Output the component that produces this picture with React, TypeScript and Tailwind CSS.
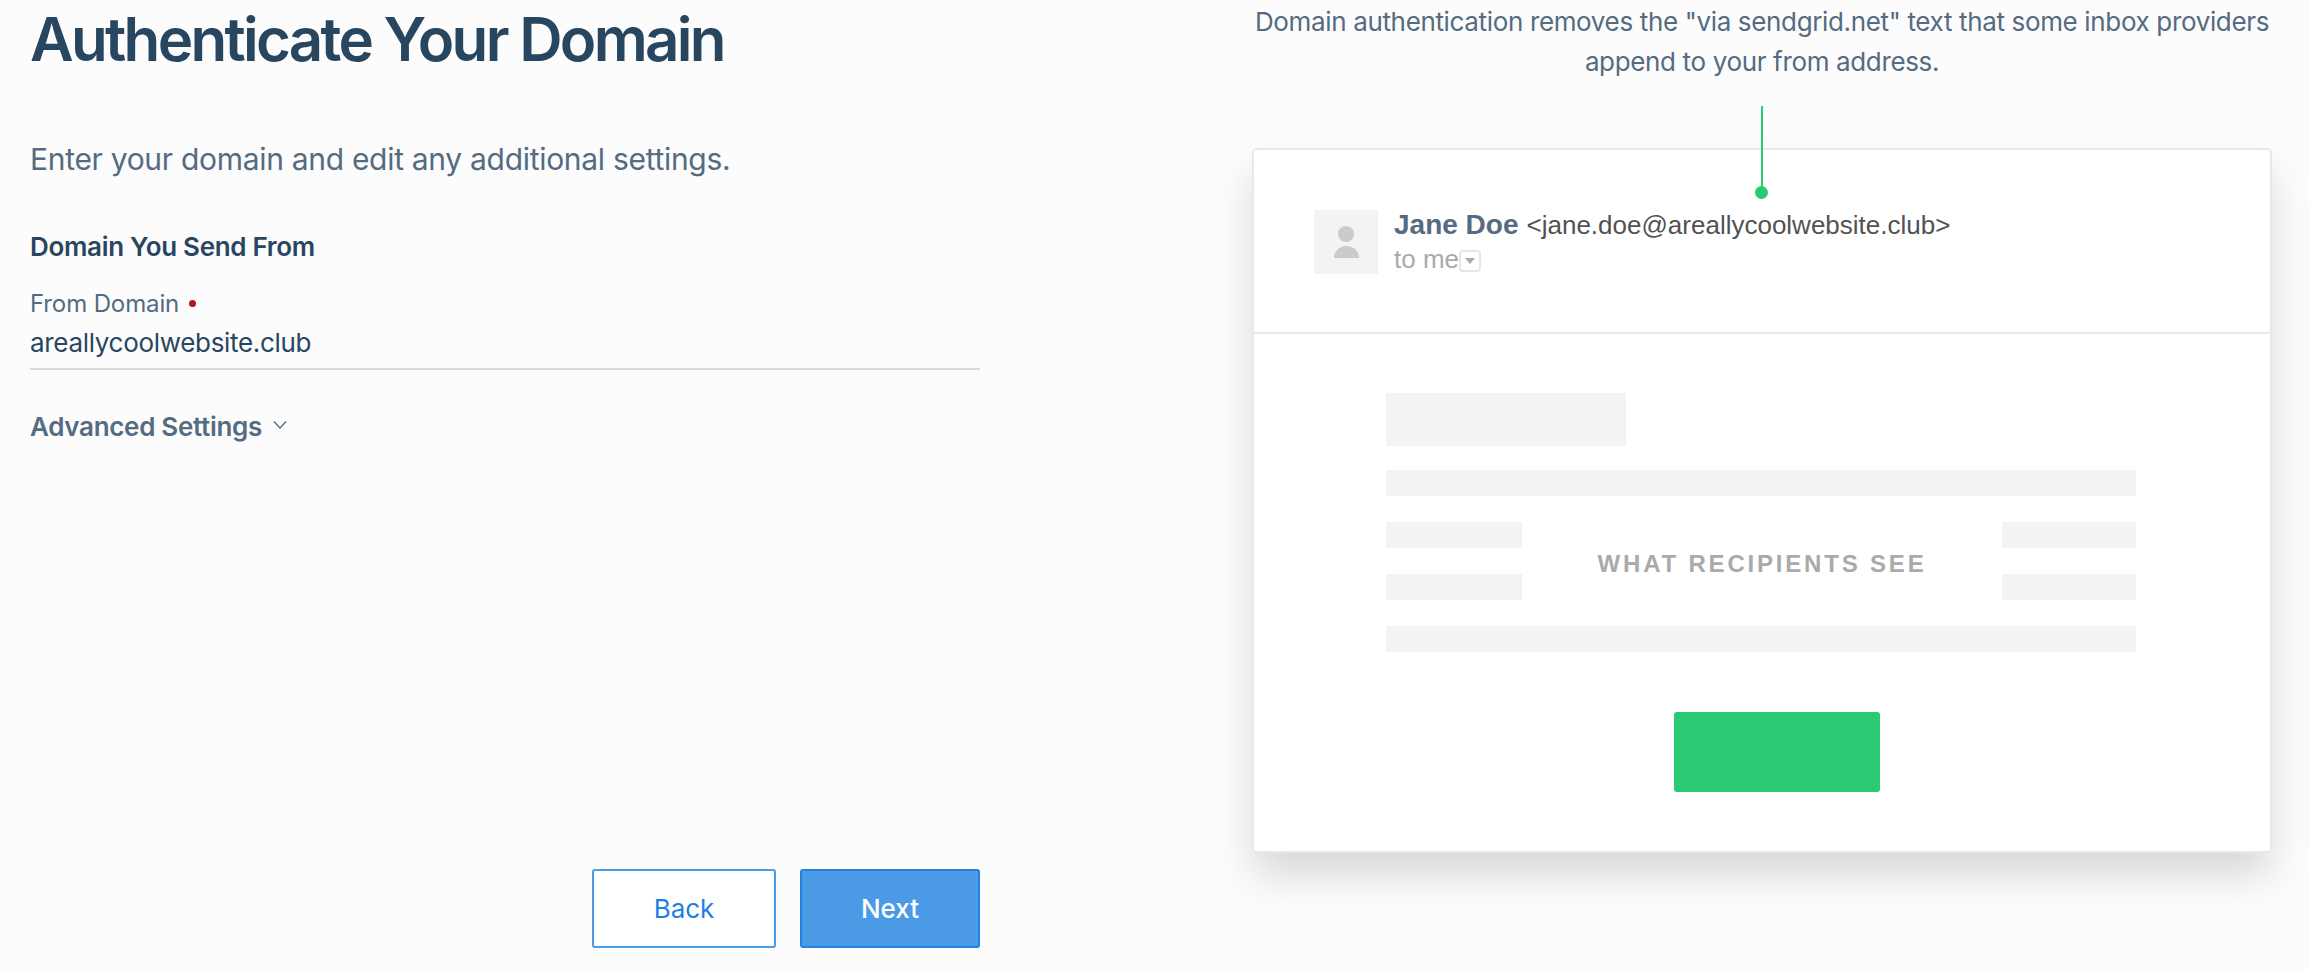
import React from "react";

function Block({ className }: { className: string }) {
  return <div className={`bg-[#f3f3f3] ${className}`} />;
}

export default function App() {
  return (
    <div className="h-[970px] w-[2310px] overflow-hidden bg-[#fcfcfc] font-['Inter',sans-serif] flex">
      <div className="ml-[30px] flex h-full w-[950px] flex-col">
        <h1 className="mt-[7px] h-[64px] text-[60px] leading-[64px] font-semibold tracking-[-0.045em] text-[#294661]">
          Authenticate Your Domain
        </h1>
        <p className="mt-[69px] text-[30px] leading-[38px] tracking-[-0.01em] text-[#546b81]">
          Enter your domain and edit any additional settings.
        </p>
        <h2 className="mt-[55px] text-[26px] leading-[28px] font-semibold tracking-[-0.012em] text-[#294661]">
          Domain You Send From
        </h2>
        <div className="mt-[30px] flex items-center text-[24px] leading-[26px] tracking-[-0.005em] text-[#546b81]">
          From Domain
          <span className="relative -top-[1px] ml-[10px] size-[7px] rounded-full bg-[#b7121f]" />
        </div>
        <div className="mt-[10px] h-[43px] border-b-2 border-[#d4dadf] text-[26px] leading-[32px] tracking-[-0.012em] text-[#294661]">
          areallycoolwebsite.club
        </div>
        <div className="mt-[43px] flex items-center gap-[11px] text-[26px] leading-[28px] font-semibold tracking-[-0.012em] text-[#546b81]">
          Advanced Settings
          <svg width="14" height="10" viewBox="0 0 14 10" fill="none" className="relative -top-[2px]">
            <path d="M1 1.5 L7 8 L13 1.5" stroke="#546b81" strokeWidth="1.3" />
          </svg>
        </div>
        <div className="mt-auto mb-[22px] flex justify-end gap-[24px]">
          <button className="h-[79px] w-[184px] rounded-[3px] border-2 border-[#4b9be8] bg-white text-[26px] text-[#1f7fe0]">
            Back
          </button>
          <button className="h-[79px] w-[180px] rounded-[3px] border-2 border-[#2680e0] bg-[#4b9ae6] text-[26px] font-medium text-white">
            Next
          </button>
        </div>
      </div>

      <div className="ml-[272px] flex w-[1020px] flex-col">
        <p className="mt-[2px] text-center text-[26px] leading-[40px] tracking-[-0.0135em] text-[#546b81]">
          Domain authentication removes the "via sendgrid.net" text that some inbox providers append to your from address.
        </p>
        <div className="relative mt-[66px] h-[705px] rounded-[5px] border-2 border-[#e9e9ec] bg-white shadow-[0_24px_40px_-2px_rgba(0,0,0,0.15)]">
          <div className="absolute -top-[44px] left-[501px] flex flex-col items-center">
            <div className="h-[81px] w-[2px] bg-[#2bc974]" />
            <div className="-mt-[1px] size-[13px] rounded-full bg-[#2bc974]" />
          </div>
          <div className="flex h-[184px] items-start gap-[16px] border-b-2 border-[#e9e9ec] pt-[60px] pl-[60px] font-['Liberation_Sans',sans-serif]">
            <div className="flex h-[64px] w-[64px] flex-col items-center justify-center bg-[#f3f3f3]">
              <div className="size-[16px] rounded-full bg-[#cbcbcb]" />
              <div className="mt-[4px] h-[12px] w-[25px] rounded-t-full bg-[#cbcbcb]" />
            </div>
            <div className="-mt-[2px] flex flex-col">
              <div className="flex items-baseline gap-[8px] text-[26px] leading-[34px] text-[#525252]">
                <span className="text-[28px] font-bold text-[#546b81]">Jane Doe</span>
                &lt;jane.doe@areallycoolwebsite.club&gt;
              </div>
              <div className="flex items-center text-[26px] leading-[34px] text-[#aaaaaa]">
                to me
                <span className="mt-[4px] flex h-[22px] w-[22px] items-center justify-center rounded-[4px] border-2 border-[#e6e6e6]">
                  <svg width="10" height="6" viewBox="0 0 10 6"><path d="M0 0 H10 L5 6 Z" fill="#aaaaaa" /></svg>
                </span>
              </div>
            </div>
          </div>
          <div className="flex flex-col pt-[59px] pr-[134px] pl-[132px]">
            <Block className="h-[53px] w-[240px]" />
            <Block className="mt-[24px] h-[26px] w-full" />
            <div className="relative mt-[26px] flex justify-between">
              <div className="flex flex-col gap-[26px]">
                <Block className="h-[26px] w-[136px]" />
                <Block className="h-[26px] w-[136px]" />
              </div>
              <div className="flex items-center pt-[6px] font-['Liberation_Sans',sans-serif] text-[24px] font-bold tracking-[0.117em] text-[#aaaaaa]">
                WHAT RECIPIENTS SEE
              </div>
              <div className="flex flex-col gap-[26px]">
                <Block className="h-[26px] w-[134px]" />
                <Block className="h-[26px] w-[134px]" />
              </div>
            </div>
            <Block className="mt-[26px] h-[26px] w-full" />
            <div className="mt-[60px] ml-[288px] h-[80px] w-[206px] rounded-[3px] bg-[#2bc974]" />
          </div>
        </div>
      </div>
    </div>
  );
}
